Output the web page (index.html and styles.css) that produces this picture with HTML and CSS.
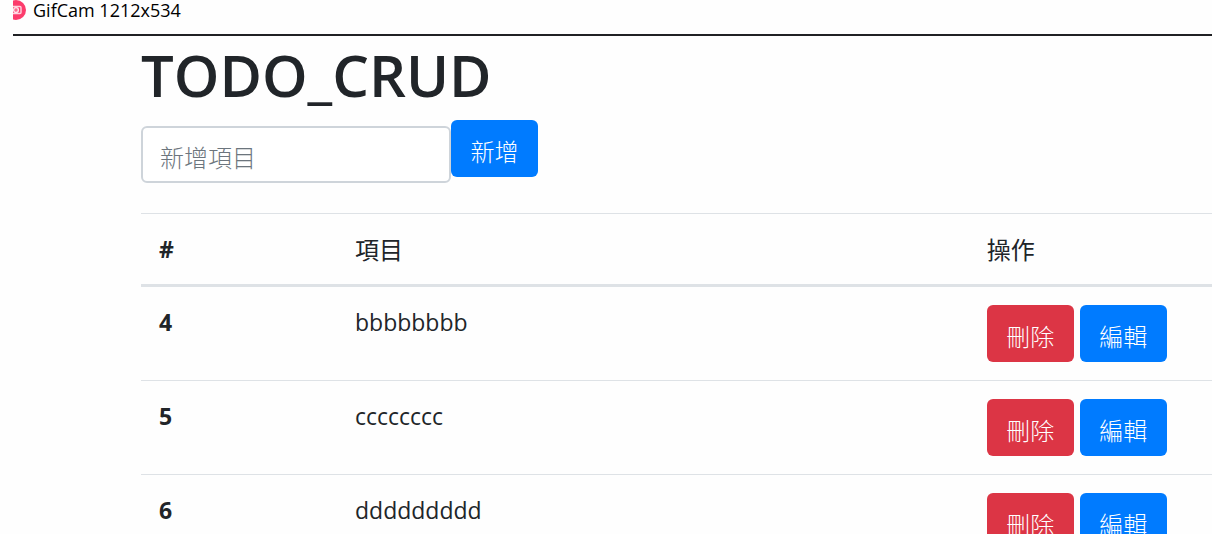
FILE: index.html
```html
<!DOCTYPE html>
<html lang="zh-Hant">
<head>
<meta charset="utf-8">
<title>TODO_CRUD</title>
<link rel="stylesheet" href="styles.css">
</head>
<body>
<header class="titlebar">
  <svg class="titlebar-icon" width="14" height="22" viewBox="0 0 14 22" aria-hidden="true">
    <circle cx="3" cy="10" r="10" fill="#fc3c6c"/>
    <path d="M0 6.500h7q1 0 1 1v5q0 1-1 1H0" fill="none" stroke="#ffd3df" stroke-width="1.400"/>
    <circle cx="3" cy="10" r="2.400" fill="#fc6c90" stroke="#ffe3ea" stroke-width="1.400"/>
  </svg>
  <span>GifCam 1212x534</span>
</header>
<main class="container">
  <h1 class="title">TODO_CRUD</h1>
  <form class="add-form">
    <input class="field" type="text" placeholder="新增項目" aria-label="新增項目">
    <button class="btn btn-add" type="button">新增</button>
  </form>
  <table class="table">
    <colgroup><col class="col-id"><col class="col-item"><col></colgroup>
    <thead>
      <tr><th scope="col">#</th><th scope="col" class="cjk-head">項目</th><th scope="col" class="cjk-head">操作</th></tr>
    </thead>
    <tbody>
      <tr><th scope="row">4</th><td>bbbbbbbb</td><td><div class="actions"><button class="btn btn-danger" type="button">刪除</button><button class="btn" type="button">編輯</button></div></td></tr>
      <tr><th scope="row">5</th><td>cccccccc</td><td><div class="actions"><button class="btn btn-danger" type="button">刪除</button><button class="btn" type="button">編輯</button></div></td></tr>
      <tr><th scope="row">6</th><td>ddddddddd</td><td><div class="actions"><button class="btn btn-danger" type="button">刪除</button><button class="btn" type="button">編輯</button></div></td></tr>
    </tbody>
  </table>
</main>
</body>
</html>
```
FILE: styles.css
```css
* { box-sizing: border-box; }
body {
  margin: 0;
  height: 100vh;
  overflow: hidden;
  background: #fefefe;
  color: #212529;
  font-family: "Open Sans", "Noto Sans CJK TC", sans-serif;
  font-size: 23px;
  line-height: 34px;
}
.titlebar {
  display: flex;
  gap: 6px;
  height: 36px;
  margin-left: 13px;
  border-bottom: 2px solid #202124;
  color: #000;
  font-family: "Open Sans", sans-serif;
  font-size: 18px;
  line-height: 20px;
}
.titlebar-icon { flex: none; }
.container { padding-left: 141px; }
.title {
  margin: 0;
  padding-top: 4px;
  font-size: 58px;
  font-weight: 600;
  line-height: 70px;
}
.add-form {
  display: flex;
  align-items: flex-start;
  margin: 10px 0 30px;
}
.field {
  width: 310px;
  height: 57px;
  margin-top: 6px;
  padding: 4px 17px 0;
  border: 2px solid #ced4da;
  border-radius: 6px;
  background: #fff;
  color: #495057;
  font: 300 24px/34px "Noto Sans CJK TC", sans-serif;
}
.field::placeholder { color: #6c757d; opacity: 1; }
.btn {
  width: 87px;
  height: 57px;
  padding: 4px 0 0;
  border: 0;
  border-radius: 6px;
  background: #007bff;
  color: #fff;
  font: 300 24px/34px "Noto Sans CJK TC", sans-serif;
}
.btn-danger { background: #dc3545; }
.table {
  width: 100%;
  table-layout: fixed;
  border-spacing: 0;
}
.col-id { width: 18.3%; }
.col-item { width: 59%; }
.table th, .table td {
  padding: 18px;
  border-top: 1px solid #dee2e6;
  text-align: left;
  vertical-align: top;
}
.table thead th { border-bottom: 3px solid #dee2e6; }
.table tbody tr:first-child > * { border-top: 0; }
.table .cjk-head {
  font-family: "Noto Sans CJK TC", sans-serif;
  font-size: 24px;
  font-weight: 400;
}
.actions { display: flex; gap: 6px; }
```
